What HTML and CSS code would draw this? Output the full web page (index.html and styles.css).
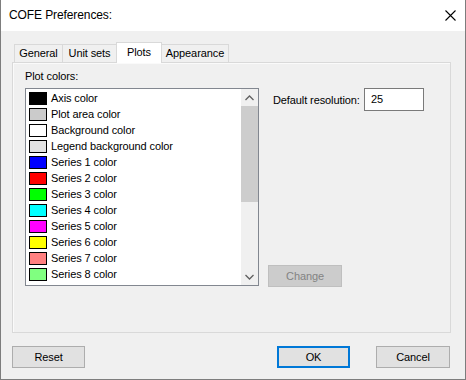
FILE: index.html
```html
<!doctype html>
<html lang="en">
  <head>
    <meta charset="utf-8">
    <title>COFE Preferences</title>
    <link rel="stylesheet" href="styles.css">
  </head>
  <body>
    <div class="window">
      <div class="titlebar">
        <span class="title">COFE Preferences:</span>
        <svg class="close" width="11" height="11" viewBox="0 0 11 11">
          <path d="M0.5 0.5 L10.5 10.5 M10.5 0.5 L0.5 10.5" stroke="#000" stroke-width="1.1" fill="none"/>
        </svg>
      </div>

      <div class="content">
        <div class="tabs">
          <div class="tab">General</div>
          <div class="tab tab-units">Unit sets</div>
          <div class="tab tab-active">Plots</div>
          <div class="tab tab-appearance">Appearance</div>
        </div>

        <div class="panel">
          <div class="label">Plot colors:</div>
          <div class="spacer"></div>

          <div class="listbox">
            <ul class="items">
              <li><span class="swatch" style="background:#000000"></span>Axis color</li>
              <li><span class="swatch" style="background:#cbcbcb"></span>Plot area color</li>
              <li><span class="swatch" style="background:#ffffff"></span>Background color</li>
              <li><span class="swatch" style="background:#e3e3e3"></span>Legend background color</li>
              <li><span class="swatch" style="background:#0000ff"></span>Series 1 color</li>
              <li><span class="swatch" style="background:#ff0000"></span>Series 2 color</li>
              <li><span class="swatch" style="background:#00ff00"></span>Series 3 color</li>
              <li><span class="swatch" style="background:#00ffff"></span>Series 4 color</li>
              <li><span class="swatch" style="background:#ff00ff"></span>Series 5 color</li>
              <li><span class="swatch" style="background:#ffff00"></span>Series 6 color</li>
              <li><span class="swatch" style="background:#ff8080"></span>Series 7 color</li>
              <li><span class="swatch" style="background:#80ff80"></span>Series 8 color</li>
            </ul>
            <div class="scrollbar">
              <div class="arrow">
                <svg width="9" height="6" viewBox="0 0 9 6"><path d="M0.5 5 L4.5 1 L8.5 5" stroke="#606060" stroke-width="1.3" fill="none"/></svg>
              </div>
              <div class="thumb"></div>
              <div class="track"></div>
              <div class="arrow">
                <svg width="9" height="6" viewBox="0 0 9 6"><path d="M0.5 1 L4.5 5 L8.5 1" stroke="#606060" stroke-width="1.3" fill="none"/></svg>
              </div>
            </div>
          </div>

          <div class="side">
            <div class="field">
              <label class="field-label">Default resolution:</label>
              <div class="input">25</div>
            </div>
            <button class="btn btn-disabled">Change</button>
          </div>
        </div>

        <div class="buttons">
          <button class="btn btn-wide">Reset</button>
          <div class="grow"></div>
          <button class="btn btn-wide btn-default">OK</button>
          <button class="btn btn-wide btn-cancel">Cancel</button>
        </div>
      </div>
    </div>
  </body>
</html>
```

FILE: styles.css
```css
body {
  margin: 0;
  font-family: "Liberation Sans", Arial, sans-serif;
  font-size: 11px;
  letter-spacing: -0.1px;
  color: #000;
}

.window {
  width: 466px;
  height: 380px;
  box-sizing: border-box;
  border-left: 1px solid #7d7d7d;
  border-right: 1px solid #7d7d7d;
  border-bottom: 1px solid #7d7d7d;
  background: #f0f0f0;
  display: flex;
  flex-direction: column;
}

.titlebar {
  height: 31px;
  background: #fff;
  display: flex;
  align-items: center;
  padding-left: 8px;
  padding-right: 9px;
}

.title {
  flex: 1;
  font-size: 12px;
  padding-bottom: 1px;
}

.content {
  padding: 11px 14px 0 11px;
  display: flex;
  flex-direction: column;
}

/* tab strip */
.tabs {
  display: flex;
  align-items: flex-end;
  height: 20px;
  padding-left: 2px;
  position: relative;
  z-index: 1;
}

.tab {
  height: 18px;
  box-sizing: border-box;
  border: 1px solid #d9d9d9;
  border-bottom: none;
  background: #f0f0f0;
  padding: 0;
  line-height: 17px;
  margin-right: -1px;
  width: 49px;
  text-align: center;
  white-space: nowrap;
}

.tab-units { width: 55px; }
.tab-appearance { width: 68px; }

.tab-active {
  height: 21px;
  width: 46px;
  background: #fff;
  margin-bottom: -1px;
  line-height: 18px;
  padding-bottom: 3px;
  position: relative;
  z-index: 2;
}

.panel {
  height: 271px;
  box-sizing: border-box;
  border: 1px solid #d9d9d9;
  background: #f0f0f0;
  box-shadow: inset 1px 1px 0 #fafafa;
  padding: 5px 0 0 12px;
  display: grid;
  grid-template-columns: 234px auto;
  grid-template-rows: 16px 198px;
  row-gap: 4px;
  column-gap: 9px;
}

.label {
  line-height: 16px;
}

/* color list */
.listbox {
  box-sizing: border-box;
  border: 1px solid #828790;
  background: #fff;
  display: flex;
  overflow: hidden;
}

.items {
  list-style: none;
  margin: 0;
  padding: 1px 0 0 3px;
  flex: 1;
}

.items li {
  height: 16px;
  display: flex;
  align-items: center;
  white-space: nowrap;
}

.swatch {
  width: 18px;
  height: 13px;
  box-sizing: border-box;
  border: 1px solid #000;
  margin-right: 4px;
}

.scrollbar {
  width: 17px;
  background: #f0f0f0;
  display: flex;
  flex-direction: column;
}

.arrow {
  height: 17px;
  display: flex;
  align-items: center;
  justify-content: center;
}

.thumb {
  height: 96px;
  background: #cdcdcd;
}

.track {
  flex: 1;
}

/* right side */
.side {
  display: flex;
  flex-direction: column;
  justify-content: space-between;
  height: 199px;
}

.field {
  display: flex;
  align-items: center;
}

.field-label {
  width: 96px;
  flex-shrink: 0;
  padding-left: 5px;
  box-sizing: border-box;
  white-space: nowrap;
}

.input {
  width: 60px;
  height: 23px;
  box-sizing: border-box;
  border: 1px solid #7a7a7a;
  background: #fff;
  padding-left: 6px;
  line-height: 21px;
}

.btn {
  font-family: inherit;
  font-size: 11px;
  letter-spacing: -0.1px;
  height: 22px;
  box-sizing: border-box;
  border: 1px solid #adadad;
  background: #e1e1e1;
  color: #000;
  padding: 0;
  margin: 0;
}

.btn-disabled {
  width: 74px;
  background: #cccccc;
  border-color: #bfbfbf;
  color: #838383;
}

/* dialog buttons */
.buttons {
  display: flex;
  margin-top: 13px;
  padding-right: 1px;
}

.grow { flex: 1; }

.btn-wide { width: 73px; }

.btn-default {
  border: 2px solid #0078d7;
}

.btn-cancel {
  width: 74px;
  margin-left: 26px;
}
```
